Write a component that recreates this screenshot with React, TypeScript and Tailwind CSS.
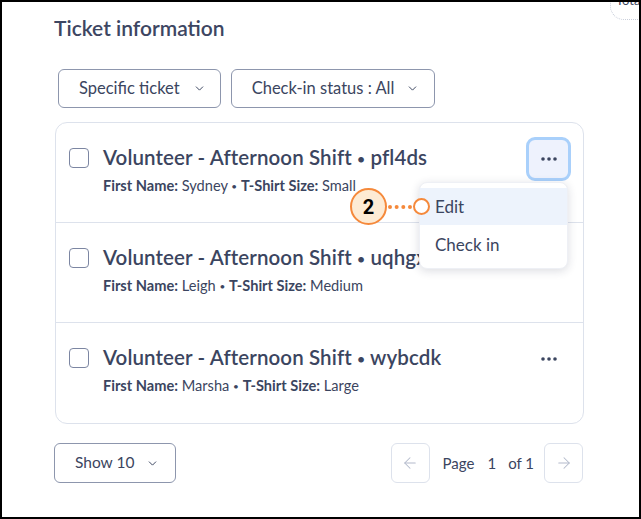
import React from "react";
import { ChevronDown, ArrowLeft, ArrowRight } from "lucide-react";

const rows = [
  { code: "pfl4ds", name: "Sydney", size: "Small", active: true },
  { code: "uqhgxk", name: "Leigh", size: "Medium", active: false },
  { code: "wybcdk", name: "Marsha", size: "Large", active: false },
];

function Dots() {
  return (
    <svg width="16" height="4" viewBox="0 0 16 4">
      <circle cx="2" cy="2" r="1.8" fill="#3b4560" />
      <circle cx="8" cy="2" r="1.8" fill="#3b4560" />
      <circle cx="14" cy="2" r="1.8" fill="#3b4560" />
    </svg>
  );
}

function Bullet({ cls }: { cls: string }) {
  return <span className={`${cls} relative top-[-1px]`}>•</span>;
}

export default function App() {
  return (
    <div className="relative w-[641px] h-[519px] border-2 border-black bg-white overflow-hidden font-['Lato','Noto_Sans',sans-serif] text-[#3b4560]">
      {/* partial card at top right */}
      <div className="absolute left-[608px] top-[-22px] w-[60px] h-[40px] border border-dotted border-[#c9ceda] rounded-bl-[14px] pl-[5px] pt-[13px] text-[13px] leading-none text-[#3b4560]">
        Total
      </div>

      <div className="flex flex-col pl-[52px] pr-[55px] pt-[14px]">
        <h2 className="text-[21px] leading-[24px] font-semibold text-[#3d4662]">Ticket information</h2>

        <div className="flex gap-[10px] mt-[29px] ml-[4px]">
          <button className="flex items-center gap-[13px] h-[39px] pl-[20px] pr-[14px] border border-[#8d96ad] rounded-[6px] text-[16.5px] text-[#3b4560]">
            Specific ticket
            <ChevronDown size={13} strokeWidth={1.8} />
          </button>
          <button className="flex items-center gap-[12px] h-[39px] pl-[20px] pr-[15px] border border-[#8d96ad] rounded-[6px] text-[16.5px] text-[#3b4560]">
            Check-in status : All
            <ChevronDown size={13} strokeWidth={1.8} />
          </button>
        </div>

        <div className="mt-[14px] ml-[1px] w-[529px] border border-[#dde2ec] rounded-[12px] flex flex-col">
          {rows.map((r, i) => (
            <div
              key={r.code}
              className={`relative h-[100px] flex items-start pl-[13px] pr-[12px] ${i < rows.length - 1 ? "border-b border-[#dde2ec]" : ""}`}
            >
              <div className="mt-[25px] w-[20px] h-[20px] border-[1.5px] border-[#7c86a2] rounded-[4px] shrink-0" />
              <div className="ml-[14px] mt-[21px] flex flex-col">
                <div className="text-[20.5px] tracking-[0.1px] leading-[26px] font-semibold text-[#3b4560] whitespace-nowrap">
                  Volunteer - Afternoon Shift <Bullet cls="text-[14px]" /> {r.code}
                </div>
                <div className="mt-[5px] text-[14.6px] leading-[16px] text-[#3b4560] whitespace-nowrap">
                  <span className="font-bold">First Name:</span> {r.name} <Bullet cls="text-[10px]" />{" "}
                  <span className="font-bold">T-Shirt Size:</span> {r.size}
                </div>
              </div>
              <div className="ml-auto mt-[14px]">
                {r.active ? (
                  <div className="w-[45px] h-[44px] rounded-[9px] border-[3px] border-[#a9d0fb] bg-[#eef2fd] flex items-center justify-center">
                    <Dots />
                  </div>
                ) : i === 2 ? (
                  <div className="w-[45px] h-[44px] flex items-center justify-center">
                    <Dots />
                  </div>
                ) : null}
              </div>

              {r.active && (
                <>
                  <div className="absolute z-20 left-[363px] top-[59px] w-[149px] bg-white rounded-[8px] shadow-[0_2px_10px_rgba(30,40,70,0.16)] border border-[#eef0f5] py-[5px] flex flex-col">
                    <div className="h-[37px] flex items-center pl-[15px] bg-[#edf3fc] text-[17px] text-[#3b4560]">Edit</div>
                    <div className="h-[37px] flex items-center pl-[15px] mt-[1px] text-[17px] text-[#3b4560]">Check in</div>
                  </div>
                  <div className="absolute z-30 left-[294px] top-[65px] flex items-center">
                    <div className="w-[37px] h-[37px] rounded-full border-[2.5px] border-[#f5893b] bg-[#fdebd4] flex items-center justify-center text-[20px] font-bold text-black font-['Roboto',sans-serif]">
                      2
                    </div>
                    <div className="w-[24px] border-t-[4px] border-dotted border-[#f5893b] mx-[1px]" />
                    <div className="w-[17px] h-[17px] rounded-full border-[2.5px] border-[#f5893b] bg-white" />
                  </div>
                </>
              )}
            </div>
          ))}
        </div>

        <div className="mt-[19px] flex items-center justify-between w-[529px]">
          <button className="flex items-center gap-[12px] h-[40px] pl-[20px] pr-[16px] border border-[#8d96ad] rounded-[6px] text-[15.5px] text-[#3b4560]">
            Show 10
            <ChevronDown size={13} strokeWidth={1.8} />
          </button>
          <div className="flex items-center">
            <div className="w-[39px] h-[40px] border border-[#dde2ec] rounded-[6px] flex items-center justify-center text-[#b3bacb]">
              <ArrowLeft size={18} strokeWidth={1.4} />
            </div>
            <span className="ml-[13px] text-[15px]">Page</span>
            <span className="ml-[13px] text-[15px]">1</span>
            <span className="ml-[12px] mr-[10px] text-[15px]">of 1</span>
            <div className="w-[39px] h-[40px] border border-[#dde2ec] rounded-[6px] flex items-center justify-center text-[#b3bacb]">
              <ArrowRight size={18} strokeWidth={1.4} />
            </div>
          </div>
        </div>
      </div>
    </div>
  );
}
